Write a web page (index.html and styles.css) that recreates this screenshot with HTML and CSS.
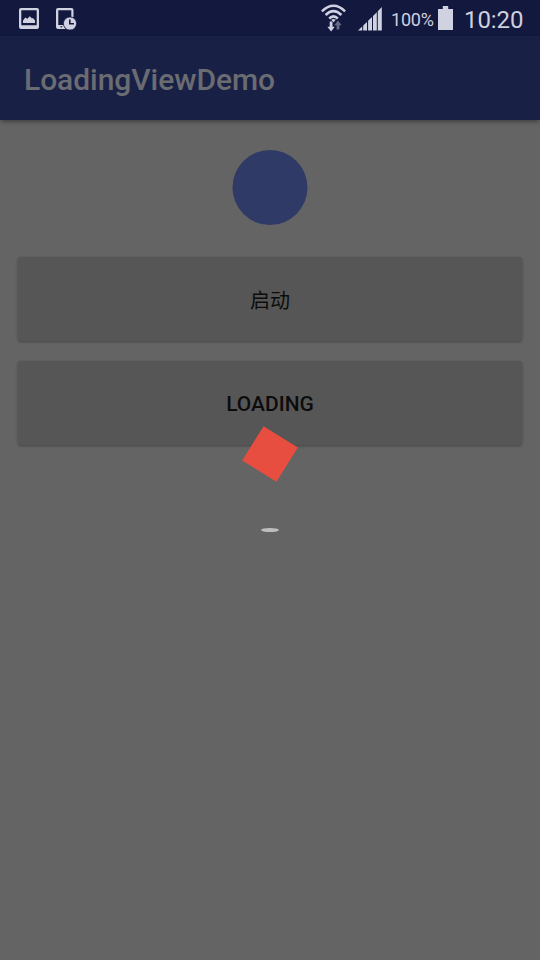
FILE: index.html
```html
<!DOCTYPE html>
<html lang="zh">
<head>
<meta charset="utf-8">
<title>LoadingViewDemo</title>
<link rel="stylesheet" href="styles.css">
</head>
<body>
<div class="screen">
  <div class="status">
    <svg class="icon picture" width="20" height="22" viewBox="0 0 20 22">
      <path fill-rule="evenodd" d="M2 0H18Q20 0 20 2V19Q20 21 18 21H2Q0 21 0 19V2Q0 0 2 0ZM2.3 2.3V17.3H17.7V2.3Z"/>
      <path d="M4 15V12.6L6.3 9.6L8.3 10.8L10.8 8.2L13 10.6L14 10L16 12.6V15Z"/>
    </svg>
    <svg class="icon device" width="21" height="23" viewBox="0 0 21 23">
      <path fill-rule="evenodd" d="M2 0H15.5Q17.5 0 17.5 2V9H15.3V2.3H2.3V17H8Q8 19.5 9.5 21H2Q0 21 0 19V2Q0 0 2 0Z"/>
      <path class="notch" d="M4 18.3H6.6L5.3 19.8Z"/>
      <circle cx="14" cy="15.5" r="6.6"/>
      <path class="hand" d="M13.8 11.5V15.8H18"/>
    </svg>
    <span class="spacer"></span>
    <svg class="icon wifi" width="26" height="28" viewBox="0 0 26 28">
      <g class="waves">
        <path d="M.9 7.3Q12.5 -3.8 24.1 7.3"/>
        <path d="M4.6 11Q12.5 3.2 20.4 11"/>
        <path d="M8.2 14.5Q12.5 10.3 16.8 14.5"/>
      </g>
      <path d="M10.2 15.8Q12.5 14.2 14.8 15.8L12.5 18.2Z"/>
      <path d="M8.7 17.5H11.5V22.7H13.8L10.1 27.4L6.4 22.7H8.7Z"/>
      <path class="dim" d="M15.6 25.5V21.2H13.3L17 16.5L20.7 21.2H18.4V25.5Z"/>
    </svg>
    <svg class="icon signal" width="25" height="25" viewBox="0 0 25 25">
      <path d="M0 24.5L4.2 20.6V24.5ZM5.2 19.5L9 16V24.5H5.2ZM10.1 14.8L14 11V24.5H10.1ZM15 10L18.8 6.3V24.5H15ZM19.8 5.2L23.8 1V24.5H19.8Z"/>
    </svg>
    <span class="percent">100%</span>
    <svg class="icon battery" width="15" height="24" viewBox="0 0 15 24">
      <path d="M4.8 0H10.2V3H15V24H0V3H4.8Z"/>
    </svg>
    <span class="clock">10:20</span>
  </div>
  <header class="toolbar"><h1 class="title">LoadingViewDemo</h1></header>
  <main class="content">
    <svg class="circle" width="76" height="75" viewBox="0 0 76 75">
      <circle cx="38" cy="37.5" r="37.5"/>
    </svg>
    <button class="button start">启动</button>
    <button class="button">LOADING</button>
  </main>
  <div class="loader">
    <div class="square"></div>
    <div class="shadow"></div>
  </div>
</div>
</body>
</html>
```
FILE: styles.css
```css
* {
  box-sizing: border-box;
}

body {
  margin: 0;
  font-family: Roboto, "Noto Sans CJK SC", sans-serif;
}

.screen {
  position: relative;
  display: flex;
  flex-direction: column;
  width: 540px;
  height: 960px;
  overflow: hidden;
  background: #646464;
}

.status {
  display: flex;
  align-items: flex-start;
  height: 36px;
  padding: 0 17px 0 19px;
  background: #13183f;
  color: #cfd0de;
}

.icon {
  flex: none;
  fill: #d0d1e1;
}

.picture {
  margin-top: 8px;
}

.device {
  margin: 8px 0 0 17px;
}

.device circle {
  stroke: #13183f;
  stroke-width: 0.8;
}

.device .notch {
  fill: #13183f;
}

.device .hand {
  fill: none;
  stroke: #13183f;
  stroke-width: 1.6;
}

.spacer {
  flex: 1;
}

.wifi {
  margin: 4px 11px 0 0;
}

.waves {
  fill: none;
  stroke: #d0d1e1;
  stroke-width: 2.5;
}

.dim {
  fill: #686b88;
}

.signal {
  margin: 6px 8px 0 0;
}

.percent {
  width: 47px;
  font-size: 18px;
  line-height: 39px;
  letter-spacing: -0.2px;
}

.battery {
  margin: 6px 11px 0 0;
}

.clock {
  width: 59px;
  font-size: 24px;
  line-height: 40px;
  letter-spacing: -0.1px;
  white-space: nowrap;
}

.toolbar {
  display: flex;
  align-items: center;
  height: 84px;
  padding: 3px 24px 0;
  background: #192046;
  box-shadow: 0 3px 4px -1px rgba(0, 0, 0, 0.35);
}

.title {
  margin: 0;
  color: #6a6c72;
  font-size: 30px;
  font-weight: 500;
  line-height: 40px;
  letter-spacing: -0.05px;
}

.content {
  display: flex;
  flex-direction: column;
  align-items: center;
  gap: 20px;
  padding: 30px 18px 0;
}

.circle {
  margin-bottom: 12px;
  fill: #2f3a66;
}

.button {
  width: 100%;
  height: 84px;
  padding: 1px 0 0;
  border: 0;
  border-radius: 3px;
  background: #565656;
  box-shadow: 0 1px 3px rgba(0, 0, 0, 0.32);
  color: #0c0c0c;
  font-family: inherit;
  font-size: 21px;
  font-weight: 500;
}

.start {
  font-size: 20px;
  font-weight: 400;
}

.loader {
  position: absolute;
  top: 434px;
  left: 0;
  display: flex;
  flex-direction: column;
  align-items: center;
  gap: 54px;
  width: 539px;
}

.square {
  width: 40px;
  height: 40px;
  background: #e84e40;
  transform: rotate(32deg) scale(1.01);
}

.shadow {
  width: 18px;
  height: 4px;
  border-radius: 50%;
  background: #bdbdbd;
}
```
